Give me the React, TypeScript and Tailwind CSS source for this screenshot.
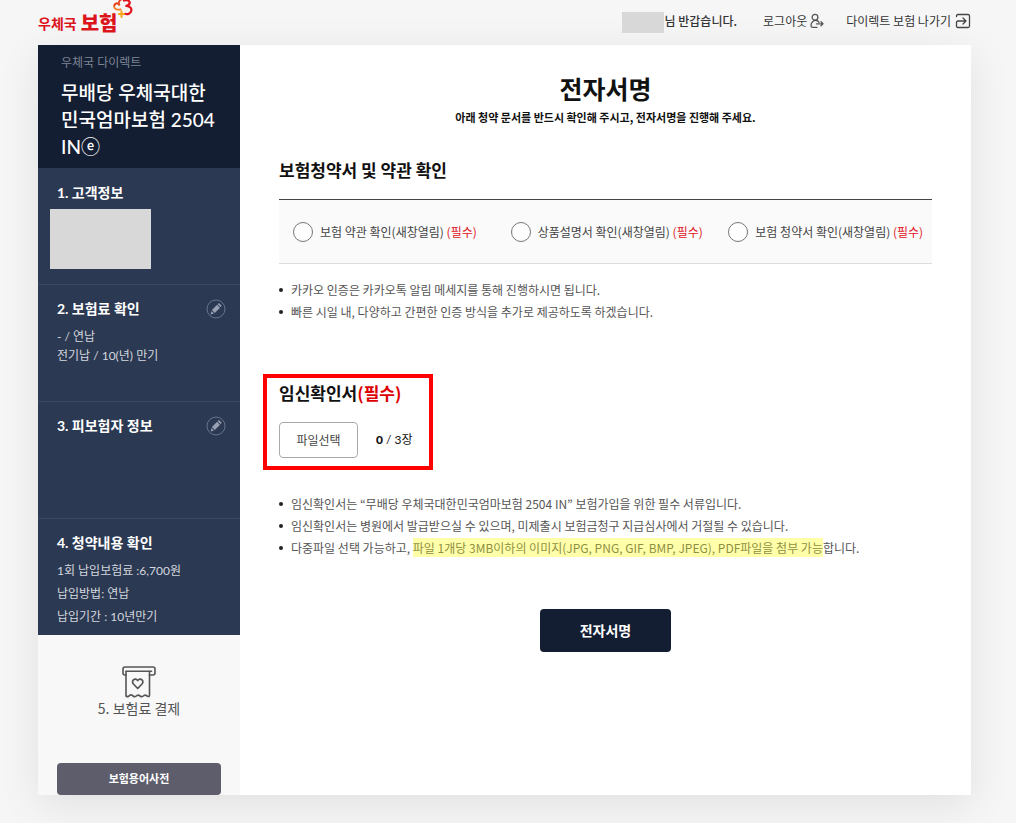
import React from "react";

const SANS = "font-['Noto_Sans_CJK_KR',sans-serif]";
const LATO = "font-['Lato','Noto_Sans_CJK_KR',sans-serif]";

function LogoMark() {
  return (
    <svg viewBox="0 0 22 19" className="absolute top-0 left-[74px] h-[19px] w-[22px]" fill="none" aria-hidden="true">
      <path d="M8.600 9.300C5 10.500 1.600 8.500 2.200 5.600C2.800 3 6 2.600 7.400 5" stroke="#f47a20" strokeWidth="1.800" strokeLinecap="round" />
      <path d="M2.300 5.500C3 3 6 2.600 7.400 5C6.200 2.800 7 .6 8.800 0" stroke="#e8401f" strokeWidth="1.800" strokeLinecap="round" />
      <path d="M12 .6C15 -.8 18.300 .8 17.600 3.400C17.200 5 15.400 5.900 13.400 6C16.800 5.800 20 7.600 19.300 10.700C18.700 13.600 15.600 14.800 13 13.800" stroke="#e3131b" strokeWidth="2.200" strokeLinecap="round" />
      <path d="M9.500 11.200V17M6.900 14H12" stroke="#f9a51a" strokeWidth="2" strokeLinecap="round" />
    </svg>
  );
}

function LogoutIcon() {
  return (
    <svg viewBox="0 0 14 16" className="h-4 w-[14px]" fill="none" stroke="#555" strokeWidth="1.300" strokeLinecap="round" strokeLinejoin="round" aria-hidden="true">
      <circle cx="5" cy="4.300" r="2.900" />
      <path d="M6.500 7.500C4 7 1 9 1 12.500C1 13.800 1.500 14.300 2.500 14.300H7M6.500 7.500C7.800 7.800 8.500 8.500 9 9.300M6.500 10.800H13M11 8.800L13 10.800L11 12.800" />
    </svg>
  );
}

function ExitIcon() {
  return (
    <svg viewBox="0 0 16 16" className="h-4 w-4" fill="none" stroke="#444" strokeWidth="1.300" strokeLinecap="round" strokeLinejoin="round" aria-hidden="true">
      <path d="M1.500 3.500V3Q1.500 1.500 3 1.500H13Q14.500 1.500 14.500 3V13Q14.500 14.500 13 14.500H3Q1.500 14.500 1.500 13V9.500Q1.500 8 3 8H10.500M8 5L11 8L8 11" />
    </svg>
  );
}

function PencilIcon() {
  return (
    <svg viewBox="0 0 20 20" className="h-5 w-5" fill="none" aria-hidden="true">
      <circle cx="10" cy="10" r="9" stroke="#68748d" />
      <path d="M12.900 4L15.700 6.800L14.600 8L11.700 5.200ZM11.100 5.800L14 8.700L8.800 13.900L5.900 11ZM5.400 11.900L7.900 14.500L4.700 15.400Z" fill="#98a1b3" />
    </svg>
  );
}

function PaymentIcon() {
  return (
    <svg viewBox="0 0 34 32" className="h-8 w-[34px]" fill="none" stroke="#555" strokeWidth="1.600" strokeLinecap="round" strokeLinejoin="round" aria-hidden="true">
      <path d="M4 9H3Q1 9 1 7V3Q1 1 3 1H31Q33 1 33 3V7Q33 9 31 9H27.500" />
      <path d="M4 5.200H29.500" />
      <path d="M4 5.500V30Q6 31.500 7.500 29.500Q9 28 11 30Q13 31.500 15 29.500Q16.500 28.500 18 30Q20 31.500 22 29.500Q23.500 28.500 25 30Q27.500 31.500 27.500 29V5.500" />
      <path d="M15.700 22.500L11.400 18C8.700 15 12.800 11 15.700 14.500C18.600 11 22.700 15 20 18Z" strokeWidth="1.700" />
    </svg>
  );
}

type StepProps = { title: string; editable?: boolean; children?: React.ReactNode };

function Step({ title, editable, children }: StepProps) {
  return (
    <li className="h-[117px] border-t border-[#3a4761] bg-[#2c3953] pt-3 pr-3 pl-[19px] text-[#d3d7de] first:h-[116px] first:border-t-0 first:pt-[13px]">
      <div className="flex h-6 items-center justify-between">
        <h2 className="text-[14px] leading-6 font-bold text-white">{title}</h2>
        {editable && (
          <button type="button" aria-label={`${title} 수정`} className="mr-0.5">
            <PencilIcon />
          </button>
        )}
      </div>
      {children}
    </li>
  );
}

function Sidebar() {
  return (
    <aside className={`flex w-[202px] shrink-0 flex-col bg-[#f8f8f8] ${LATO}`}>
      <div className="h-[123px] bg-[#141e32] px-[23px] pt-2">
        <p className="text-[12px] leading-5 text-[#7d8595]">우체국 다이렉트</p>
        <p className="mt-1.5 text-[19px] leading-[27px] font-medium text-white">
          무배당 우체국대한
          <br />
          민국엄마보험 2504
          <br />
          INⓔ
        </p>
      </div>
      <ol>
        <Step title="1. 고객정보">
          <div className="mt-1 -ml-[7px] h-[60px] w-[101px] bg-[#d8d8d8]" />
        </Step>
        <Step title="2. 보험료 확인" editable>
          <p className="mt-1.5 text-[12px] leading-[19px]">
            - / 연납
            <br />
            전기납 / 10(년) 만기
          </p>
        </Step>
        <Step title="3. 피보험자 정보" editable />
        <Step title="4. 청약내용 확인">
          <p className="mt-1 text-[12px] leading-[23px]">
            1회 납입보험료 :6,700원
            <br />
            납입방법: 연납
            <br />
            납입기간 : 10년만기
          </p>
        </Step>
      </ol>
      <div className="flex flex-1 flex-col items-center px-[19px] pt-[31px] text-[#555]">
        <PaymentIcon />
        <h2 className={`text-[14px] leading-5 ${SANS}`}>5. 보험료 결제</h2>
        <button type="button" className="mt-auto h-8 w-full rounded-[4px] bg-[#5d5d6c] text-[11px] font-bold text-white">
          보험용어사전
        </button>
      </div>
    </aside>
  );
}

const documents = ["보험 약관 확인(새창열림)", "상품설명서 확인(새창열림)", "보험 청약서 확인(새창열림)"];

function Notes({ items, className }: { items: React.ReactNode[]; className: string }) {
  return (
    <ul className={`text-[12px] leading-[22px] text-[#555] ${className}`}>
      {items.map((item, i) => (
        <li key={i} className="flex items-center gap-2">
          <span className="h-1 w-1 shrink-0 rounded-full bg-[#222]" />
          <span>{item}</span>
        </li>
      ))}
    </ul>
  );
}

export default function App() {
  return (
    <div className={`min-h-screen bg-[#f6f6f6] pr-[45px] pb-7 pl-[38px] text-[#111] ${SANS}`}>
      <header className="flex h-[45px] items-start justify-between">
        <a href="#" className="relative flex items-center gap-1 pt-2 text-[#dc141c]">
          <span className="text-[14px] font-bold">우체국</span>
          <span className="text-[20px] font-black">보험</span>
          <LogoMark />
        </a>
        <nav className="flex items-center pt-[9px] text-[12px] leading-[22px] text-[#333]">
          <span className="flex items-center gap-px">
            <span className="mt-[3px] h-[21px] w-[42px] bg-[#d8d8d8]" />
            <span className="font-medium">님 반갑습니다.</span>
          </span>
          <a href="#" className="ml-[26px] flex items-center gap-[3px]">
            로그아웃
            <LogoutIcon />
          </a>
          <a href="#" className="ml-[22px] flex items-center gap-1">
            다이렉트 보험 나가기
            <ExitIcon />
          </a>
        </nav>
      </header>

      <div className="flex min-h-[750px] bg-white shadow-[0_10px_40px_rgba(0,0,0,0.09)]">
        <Sidebar />
        <main className="flex min-w-0 flex-1 flex-col px-[39px] pt-[26px]">
          <h1 className="text-center text-[25px] leading-[34px] font-bold">전자서명</h1>
          <p className="text-center text-[11px] leading-6 font-bold">
            아래 청약 문서를 반드시 확인해 주시고, 전자서명을 진행해 주세요.
          </p>

          <h2 className="mt-[27px] text-[17px] leading-7 font-bold">보험청약서 및 약관 확인</h2>
          <div className="mt-[15px] grid h-[65px] grid-cols-3 items-center border-t border-b border-t-[#444] border-b-[#ddd] bg-[#fafafa]">
            {documents.map((label) => (
              <label key={label} className="flex items-center gap-[7px] pl-[14px] text-[12px] whitespace-nowrap text-[#444]">
                <input
                  type="checkbox"
                  className="h-5 w-5 shrink-0 appearance-none rounded-full border border-[#777] bg-white checked:bg-[#141e32]"
                />
                <span>
                  {label} <span className="text-[#e0141c]">(필수)</span>
                </span>
              </label>
            ))}
          </div>
          <Notes
            className="mt-[15px]"
            items={[
              "카카오 인증은 카카오톡 알림 메세지를 통해 진행하시면 됩니다.",
              "빠른 시일 내, 다양하고 간편한 인증 방식을 추가로 제공하도록 하겠습니다.",
            ]}
          />

          <section className="mt-[51px] -ml-4 h-[96px] w-[170px] border-4 border-[#fe0000] pl-3">
            <h2 className="mt-px text-[17px] leading-7 font-bold whitespace-nowrap">
              임신확인서<span className="text-[#dc0000]">(필수)</span>
            </h2>
            <div className="mt-[15px] flex items-center gap-[18px]">
              <button type="button" className="h-9 w-[79px] rounded-[4px] border border-[#aaa] bg-white text-[12px] text-[#444]">
                파일선택
              </button>
              <span className={`text-[12px] whitespace-nowrap ${LATO}`}>
                <b className="font-black">0</b> / 3장
              </span>
            </div>
          </section>

          <Notes
            className="mt-[23px]"
            items={[
              "임신확인서는 “무배당 우체국대한민국엄마보험 2504 IN” 보험가입을 위한 필수 서류입니다.",
              "임신확인서는 병원에서 발급받으실 수 있으며, 미제출시 보험금청구 지급심사에서 거절될 수 있습니다.",
              <>
                다중파일 선택 가능하고,{" "}
                <mark className="bg-[#ffffaa] py-px text-[#8f8f42]">
                  파일 1개당 3MB이하의 이미지(JPG, PNG, GIF, BMP, JPEG), PDF파일을 첨부 가능
                </mark>
                합니다.
              </>,
            ]}
          />

          <button type="button" className="mt-[50px] h-[43px] w-[131px] self-center rounded-[4px] bg-[#141e32] text-[14px] font-bold text-white">
            전자서명
          </button>
        </main>
      </div>
    </div>
  );
}
